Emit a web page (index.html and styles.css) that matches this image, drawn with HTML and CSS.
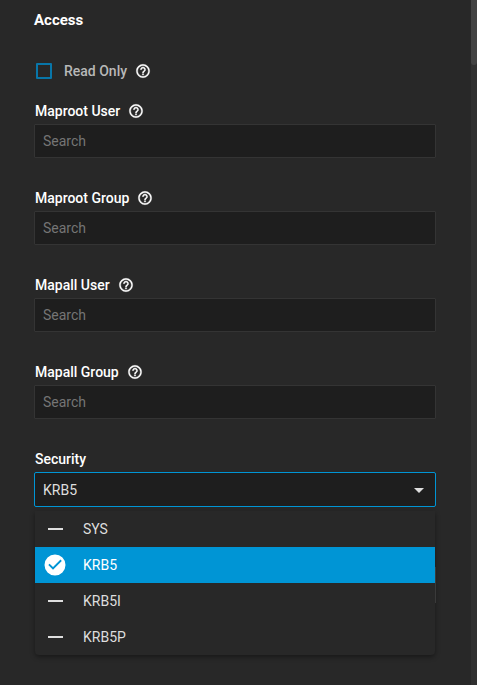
FILE: index.html
```html
<!DOCTYPE html>
<html lang="en">
<head>
<meta charset="utf-8">
<meta name="viewport" content="width=device-width, initial-scale=1">
<title>Access</title>
<link rel="stylesheet" href="styles.css">
</head>
<body>
<svg class="sprite" aria-hidden="true">
  <symbol id="help" viewBox="0 0 24 24"><path d="M11 18h2v-2h-2v2zm1-16C6.480 2 2 6.480 2 12s4.480 10 10 10 10-4.480 10-10S17.520 2 12 2zm0 18c-4.410 0-8-3.590-8-8s3.590-8 8-8 8 3.590 8 8-3.590 8-8 8zm0-14c-2.210 0-4 1.790-4 4h2c0-1.100.9-2 2-2s2 .9 2 2c0 2-3 1.750-3 5h2c0-2.250 3-2.500 3-5 0-2.210-1.790-4-4-4z"/></symbol>
  <symbol id="minus" viewBox="0 0 24 24"><path d="M5 11h15v2h-15z"/></symbol>
  <symbol id="check" viewBox="0 0 24 24"><path fill-rule="evenodd" d="M12 1.500a10.500 10.500 0 1 0 0 21a10.500 10.500 0 0 0 0-21zM10 16.700L5.300 12l1.300-1.300 3.400 3.400 7.500-7.500L18.800 7.900z"/></symbol>
</svg>
<div class="page">
  <form class="panel">
    <h3 class="title">Access</h3>
    <div class="check-row">
      <input class="check" type="checkbox" id="readonly">
      <label class="check-label" for="readonly">Read Only</label>
      <button class="help" type="button" aria-label="Help"><svg><use href="#help"/></svg></button>
    </div>
    <div class="field">
      <div class="label-row"><label for="mu">Maproot User</label><button class="help" type="button" aria-label="Help"><svg><use href="#help"/></svg></button></div>
      <input class="control" id="mu" type="text" placeholder="Search">
    </div>
    <div class="field">
      <div class="label-row"><label for="mg">Maproot Group</label><button class="help" type="button" aria-label="Help"><svg><use href="#help"/></svg></button></div>
      <input class="control" id="mg" type="text" placeholder="Search">
    </div>
    <div class="field">
      <div class="label-row"><label for="au">Mapall User</label><button class="help" type="button" aria-label="Help"><svg><use href="#help"/></svg></button></div>
      <input class="control" id="au" type="text" placeholder="Search">
    </div>
    <div class="field">
      <div class="label-row"><label for="ag">Mapall Group</label><button class="help" type="button" aria-label="Help"><svg><use href="#help"/></svg></button></div>
      <input class="control" id="ag" type="text" placeholder="Search">
    </div>
    <div class="field">
      <div class="label-row"><label for="security">Security</label></div>
      <div class="select-box">
        <select class="control select" id="security"><option>KRB5</option></select>
        <div class="menu" role="listbox" aria-label="Security">
          <button class="option" type="button" role="option"><svg><use href="#minus"/></svg>SYS</button>
          <button class="option selected" type="button" role="option" aria-selected="true"><svg><use href="#check"/></svg>KRB5</button>
          <button class="option" type="button" role="option"><svg><use href="#minus"/></svg>KRB5I</button>
          <button class="option" type="button" role="option"><svg><use href="#minus"/></svg>KRB5P</button>
        </div>
      </div>
    </div>
    <div class="covered"></div>
  </form>
  <div class="scrollbar"><div class="thumb"></div></div>
</div>
</body>
</html>
```
FILE: styles.css
```css
* { box-sizing: border-box; }

body {
  margin: 0;
  background: #282828;
  color: #fff;
  font: 14px/20px Roboto, "Liberation Sans", sans-serif;
}

.sprite { position: absolute; width: 0; height: 0; }

.page { display: flex; min-height: 100vh; }

.panel { flex: 1; min-width: 0; padding: 10px 35px 0 34px; }

.title { margin: 0 0 31px; font-size: 15px; font-weight: 700; line-height: 20px; }

.check-row { display: flex; align-items: center; height: 20px; margin-bottom: 20px; padding-left: 2px; }

.check {
  appearance: none;
  width: 16px;
  height: 16px;
  margin: 0 12px 0 0;
  border: 2px solid #0876a9;
  border-radius: 1px;
}

.check-label { color: #b8b8b8; font-weight: 500; }

.help {
  display: flex;
  margin: 0 0 0 8px;
  padding: 0;
  border: 0;
  background: none;
  color: #fff;
}

.help svg { width: 16px; height: 16px; fill: currentColor; stroke: currentColor; stroke-width: 0.5px; }

.field { margin-bottom: 30px; }

.label-row { display: flex; align-items: center; height: 20px; margin-bottom: 3px; padding-left: 1px; font-weight: 500; }

.control {
  display: block;
  width: 100%;
  height: 34px;
  padding: 0 8px;
  border: 1px solid #343434;
  border-radius: 1px;
  outline: 0;
  background: #1e1e1e;
  color: #dedede;
  font: inherit;
}

.control::placeholder { color: #757575; opacity: 1; }

.select-box { position: relative; }

.select { appearance: none; height: 35px; border-color: #0095d5; border-radius: 2px; }

.select-box::after {
  content: "";
  position: absolute;
  top: 16px;
  right: 12px;
  border: 5px solid transparent;
  border-top-color: #dedede;
  border-bottom: 0;
}

.menu {
  position: absolute;
  z-index: 1;
  top: calc(100% + 4px);
  left: 1px;
  right: 1px;
  overflow: hidden;
  border-radius: 0 0 4px 4px;
  background: #282828;
  box-shadow: 0 2px 5px rgba(0, 0, 0, 0.4);
}

.option {
  display: flex;
  align-items: center;
  gap: 16px;
  width: 100%;
  height: 36px;
  padding: 0 8px;
  border: 0;
  background: none;
  color: #dedede;
  font: inherit;
  text-align: left;
}

.option svg { width: 24px; height: 24px; fill: #dedede; }

.selected { background: #0095d5; color: #fff; }

.selected svg { fill: #fff; }

.covered { height: 36px; margin-top: 60px; border-right: 1px solid #464646; }

.scrollbar { width: 6px; background: #303030; }

.thumb { height: 65px; border-radius: 0 0 3px 3px; background: #424242; }
```
